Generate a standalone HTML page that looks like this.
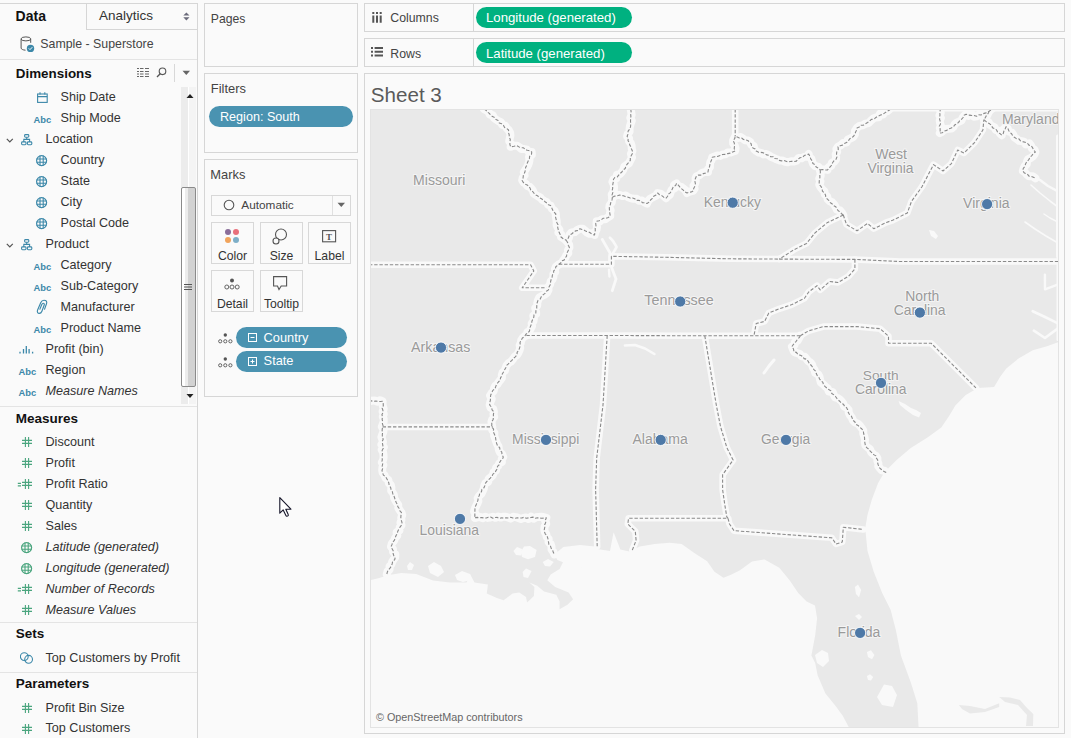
<!DOCTYPE html>
<html><head><meta charset="utf-8"><style>
html,body{margin:0;padding:0;width:1071px;height:738px;overflow:hidden;background:#fafafa;font-family:'Liberation Sans', sans-serif;}
</style></head><body>
<div style="position:absolute;left:0;top:3px;width:197px;height:1px;background:#d6d6d6"></div><div style="position:absolute;left:197px;top:3px;width:1px;height:735px;background:#d6d6d6"></div><div style="position:absolute;left:86px;top:3px;width:111px;height:27px;border-left:1px solid #d6d6d6;border-bottom:1px solid #d6d6d6;box-sizing:border-box"></div><div style="position:absolute;left:15.6px;top:9.45px;font:normal bold 14px/1 'Liberation Sans', sans-serif;color:#111;white-space:nowrap;">Data</div><div style="position:absolute;left:99px;top:9.47px;font:normal normal 13.5px/1 'Liberation Sans', sans-serif;color:#333;white-space:nowrap;">Analytics</div><svg style="position:absolute;left:183px;top:12px" width="7" height="9" viewBox="0 0 7 9"><path d="M0.3 3.6L3.4 0.4L6.5 3.6ZM0.3 5.2L3.4 8.4L6.5 5.2Z" fill="#6b6b7b"/></svg><svg style="position:absolute;left:20px;top:36px" width="16" height="17" viewBox="0 0 16 17"><ellipse cx="5.9" cy="2.9" rx="4.8" ry="2" fill="none" stroke="#555" stroke-width="1"/><path d="M1.1 2.9V12C1.1 13.2 3 14 5.5 14.2M10.7 2.9V6.8" fill="none" stroke="#555" stroke-width="1"/><circle cx="10.5" cy="12.4" r="3.7" fill="#3c88a9"/><path d="M8.8 12.4L10 13.6L12.3 11.2" fill="none" stroke="#fff" stroke-width="1"/></svg><div style="position:absolute;left:40.3px;top:37.55px;font:normal normal 12.35px/1 'Liberation Sans', sans-serif;color:#444;white-space:nowrap;">Sample - Superstore</div><div style="position:absolute;left:0;top:59px;width:197px;height:1px;background:#e4e4e4"></div><div style="position:absolute;left:15.8px;top:66.96px;font:normal bold 13.4px/1 'Liberation Sans', sans-serif;color:#111;white-space:nowrap;">Dimensions</div><svg style="position:absolute;left:136px;top:67px" width="14" height="11" viewBox="0 0 14 11"><path d="M1 1.5H3M4 1.5H7.5M9 1.5H13M1 4.5H3M4 4.5H7.5M9 4.5H13M1 7H3M4 7H7.5M9 7H13M1 9.5H3M4 9.5H7.5M9 9.5H13" stroke="#666" stroke-width="1"/></svg><svg style="position:absolute;left:156px;top:67px" width="11" height="11" viewBox="0 0 11 11"><circle cx="6.5" cy="4.3" r="3.3" fill="none" stroke="#555" stroke-width="1.1"/><path d="M4.2 6.7L1 10" stroke="#555" stroke-width="1.3"/></svg><div style="position:absolute;left:174px;top:64px;width:1px;height:18px;background:#d8d8d8"></div><svg style="position:absolute;left:182px;top:70px" width="9" height="6" viewBox="0 0 9 6"><path d="M0.5 0.8H8L4.3 5Z" fill="#666"/></svg><div style="position:absolute;left:181px;top:87px;width:7px;height:317px;background:#ececec"></div><div style="position:absolute;left:188px;top:87px;width:1px;height:317px;background:#fff"></div><div style="position:absolute;left:189px;top:87px;width:7px;height:317px;background:#f4f4f4"></div><svg style="position:absolute;left:185.5px;top:93px" width="8" height="6" viewBox="0 0 8 6"><path d="M0.5 5H7.5L4 1Z" fill="#222"/></svg><svg style="position:absolute;left:185.5px;top:393px" width="8" height="6" viewBox="0 0 8 6"><path d="M0.5 1H7.5L4 5Z" fill="#222"/></svg><div style="position:absolute;left:181px;top:187px;width:15px;height:200px;box-sizing:border-box;border:1px solid #8a8a8a;border-radius:2px;background:linear-gradient(90deg,#fff 0,#fff 24%,#ececec 24%,#ececec 46%,#d2d2d2 46%)"></div><svg style="position:absolute;left:184px;top:283px" width="8" height="8" viewBox="0 0 8 8"><path d="M0 1.5H8M0 4H8M0 6.5H8" stroke="#555" stroke-width="1"/></svg><div style="position:absolute;left:0;top:406px;width:197px;height:1px;background:#e4e4e4"></div><svg style="position:absolute;left:37px;top:92px" width="11" height="11" viewBox="0 0 11 11"><rect x="0.6" y="2" width="9.6" height="8.4" fill="none" stroke="#3c88a9" stroke-width="1.1"/><path d="M0.6 4.6H10.2M3 0.3V2.6M7.8 0.3V2.6" stroke="#3c88a9" stroke-width="1.1"/></svg><div style="position:absolute;left:60.5px;top:91.03px;font:normal normal 12.6px/1 'Liberation Sans', sans-serif;color:#333;white-space:nowrap;">Ship Date</div><div style="position:absolute;left:33.6px;top:114.7px;font:bold 9.4px/1 'Liberation Sans', sans-serif;color:#3c88a9;letter-spacing:-0.1px">Abc</div><div style="position:absolute;left:60.5px;top:112.03px;font:normal normal 12.6px/1 'Liberation Sans', sans-serif;color:#333;white-space:nowrap;">Ship Mode</div><svg style="position:absolute;left:21px;top:134px" width="12" height="12" viewBox="0 0 12 12"><rect x="3.6" y="0.6" width="4.2" height="2.6" rx="0.9" fill="none" stroke="#3c88a9" stroke-width="1.1"/><rect x="0.6" y="7.9" width="4.4" height="2.8" rx="0.9" fill="none" stroke="#3c88a9" stroke-width="1.1"/><rect x="6.4" y="7.9" width="4.4" height="2.8" rx="0.9" fill="none" stroke="#3c88a9" stroke-width="1.1"/><path d="M5.7 3.2V5.4H2.8V7.9M5.7 5.4H8.6V7.9" fill="none" stroke="#3c88a9" stroke-width="1.1"/></svg><svg style="position:absolute;left:5.5px;top:137.5px" width="9" height="6" viewBox="0 0 9 6"><path d="M0.8 0.8L3.8 3.9L6.8 0.8" fill="none" stroke="#555" stroke-width="1.2"/></svg><div style="position:absolute;left:45.5px;top:133.03px;font:normal normal 12.6px/1 'Liberation Sans', sans-serif;color:#333;white-space:nowrap;">Location</div><svg style="position:absolute;left:36px;top:155px" width="12" height="12" viewBox="0 0 12 12"><circle cx="5.6" cy="5.6" r="5" fill="none" stroke="#3c88a9" stroke-width="1.2"/><path d="M0.6 4H10.6M0.6 7.2H10.6M4 0.6V10.6M7.2 0.6V10.6" stroke="#3c88a9" stroke-width="1.1" fill="none"/></svg><div style="position:absolute;left:60.5px;top:154.03px;font:normal normal 12.6px/1 'Liberation Sans', sans-serif;color:#333;white-space:nowrap;">Country</div><svg style="position:absolute;left:36px;top:176px" width="12" height="12" viewBox="0 0 12 12"><circle cx="5.6" cy="5.6" r="5" fill="none" stroke="#3c88a9" stroke-width="1.2"/><path d="M0.6 4H10.6M0.6 7.2H10.6M4 0.6V10.6M7.2 0.6V10.6" stroke="#3c88a9" stroke-width="1.1" fill="none"/></svg><div style="position:absolute;left:60.5px;top:175.03px;font:normal normal 12.6px/1 'Liberation Sans', sans-serif;color:#333;white-space:nowrap;">State</div><svg style="position:absolute;left:36px;top:197px" width="12" height="12" viewBox="0 0 12 12"><circle cx="5.6" cy="5.6" r="5" fill="none" stroke="#3c88a9" stroke-width="1.2"/><path d="M0.6 4H10.6M0.6 7.2H10.6M4 0.6V10.6M7.2 0.6V10.6" stroke="#3c88a9" stroke-width="1.1" fill="none"/></svg><div style="position:absolute;left:60.5px;top:196.03px;font:normal normal 12.6px/1 'Liberation Sans', sans-serif;color:#333;white-space:nowrap;">City</div><svg style="position:absolute;left:36px;top:218px" width="12" height="12" viewBox="0 0 12 12"><circle cx="5.6" cy="5.6" r="5" fill="none" stroke="#3c88a9" stroke-width="1.2"/><path d="M0.6 4H10.6M0.6 7.2H10.6M4 0.6V10.6M7.2 0.6V10.6" stroke="#3c88a9" stroke-width="1.1" fill="none"/></svg><div style="position:absolute;left:60.5px;top:217.03px;font:normal normal 12.6px/1 'Liberation Sans', sans-serif;color:#333;white-space:nowrap;">Postal Code</div><svg style="position:absolute;left:21px;top:239px" width="12" height="12" viewBox="0 0 12 12"><rect x="3.6" y="0.6" width="4.2" height="2.6" rx="0.9" fill="none" stroke="#3c88a9" stroke-width="1.1"/><rect x="0.6" y="7.9" width="4.4" height="2.8" rx="0.9" fill="none" stroke="#3c88a9" stroke-width="1.1"/><rect x="6.4" y="7.9" width="4.4" height="2.8" rx="0.9" fill="none" stroke="#3c88a9" stroke-width="1.1"/><path d="M5.7 3.2V5.4H2.8V7.9M5.7 5.4H8.6V7.9" fill="none" stroke="#3c88a9" stroke-width="1.1"/></svg><svg style="position:absolute;left:5.5px;top:242.5px" width="9" height="6" viewBox="0 0 9 6"><path d="M0.8 0.8L3.8 3.9L6.8 0.8" fill="none" stroke="#555" stroke-width="1.2"/></svg><div style="position:absolute;left:45.5px;top:238.03px;font:normal normal 12.6px/1 'Liberation Sans', sans-serif;color:#333;white-space:nowrap;">Product</div><div style="position:absolute;left:33.6px;top:261.7px;font:bold 9.4px/1 'Liberation Sans', sans-serif;color:#3c88a9;letter-spacing:-0.1px">Abc</div><div style="position:absolute;left:60.5px;top:259.03px;font:normal normal 12.6px/1 'Liberation Sans', sans-serif;color:#333;white-space:nowrap;">Category</div><div style="position:absolute;left:33.6px;top:282.7px;font:bold 9.4px/1 'Liberation Sans', sans-serif;color:#3c88a9;letter-spacing:-0.1px">Abc</div><div style="position:absolute;left:60.5px;top:280.03px;font:normal normal 12.6px/1 'Liberation Sans', sans-serif;color:#333;white-space:nowrap;">Sub-Category</div><svg style="position:absolute;left:32px;top:297.3px" width="20" height="19" viewBox="0 0 20 19"><path d="M12.4 12.6L14.5 6.8C15.3 4.6 14.2 3.2 12 3.2C10.5 3.2 9.4 4.2 8.7 5.8L5.6 13C4.8 15 5.8 16.4 7.3 16.4C8.6 16.4 9.4 15.5 9.9 14.2L12.2 8C12.6 6.9 12.1 6.2 11.2 6.2C10.5 6.2 10.1 6.8 9.8 7.5L7.7 12.6" fill="none" stroke="#3c88a9" stroke-width="1.15"/></svg><div style="position:absolute;left:60.5px;top:301.03px;font:normal normal 12.6px/1 'Liberation Sans', sans-serif;color:#333;white-space:nowrap;">Manufacturer</div><div style="position:absolute;left:33.6px;top:324.7px;font:bold 9.4px/1 'Liberation Sans', sans-serif;color:#3c88a9;letter-spacing:-0.1px">Abc</div><div style="position:absolute;left:60.5px;top:322.03px;font:normal normal 12.6px/1 'Liberation Sans', sans-serif;color:#333;white-space:nowrap;">Product Name</div><svg style="position:absolute;left:19px;top:345px" width="15" height="9" viewBox="0 0 15 9"><path d="M1 6.8V8.4M4.5 4V8.4M7.3 1V8.4M10.1 4V8.4M13.6 6.8V8.4" stroke="#3c88a9" stroke-width="1.3"/></svg><div style="position:absolute;left:45.5px;top:343.03px;font:normal normal 12.6px/1 'Liberation Sans', sans-serif;color:#333;white-space:nowrap;">Profit (bin)</div><div style="position:absolute;left:18.6px;top:366.7px;font:bold 9.4px/1 'Liberation Sans', sans-serif;color:#3c88a9;letter-spacing:-0.1px">Abc</div><div style="position:absolute;left:45.5px;top:364.03px;font:normal normal 12.6px/1 'Liberation Sans', sans-serif;color:#333;white-space:nowrap;">Region</div><div style="position:absolute;left:18.6px;top:387.7px;font:bold 9.4px/1 'Liberation Sans', sans-serif;color:#3c88a9;letter-spacing:-0.1px">Abc</div><div style="position:absolute;left:45.5px;top:385.03px;font:italic normal 12.6px/1 'Liberation Sans', sans-serif;color:#333;white-space:nowrap;">Measure Names</div><div style="position:absolute;left:15.8px;top:411.67px;font:normal bold 13.5px/1 'Liberation Sans', sans-serif;color:#111;white-space:nowrap;">Measures</div><svg style="position:absolute;left:17px;top:437px" width="16" height="10" viewBox="0 0 16 10"><path d="M8.4 0V10M11.6 0V10M5 3.4H15M5 6.4H15" stroke="#4aa57e" stroke-width="1.1" fill="none"/></svg><div style="position:absolute;left:45.5px;top:436.03px;font:normal normal 12.6px/1 'Liberation Sans', sans-serif;color:#333;white-space:nowrap;">Discount</div><svg style="position:absolute;left:17px;top:458px" width="16" height="10" viewBox="0 0 16 10"><path d="M8.4 0V10M11.6 0V10M5 3.4H15M5 6.4H15" stroke="#4aa57e" stroke-width="1.1" fill="none"/></svg><div style="position:absolute;left:45.5px;top:457.03px;font:normal normal 12.6px/1 'Liberation Sans', sans-serif;color:#333;white-space:nowrap;">Profit</div><svg style="position:absolute;left:17px;top:479px" width="16" height="10" viewBox="0 0 16 10"><path d="M8.4 0V10M11.6 0V10M5 3.4H15M5 6.4H15" stroke="#4aa57e" stroke-width="1.1" fill="none"/><path d="M0.8 4.4H4M0.8 6.9H4" stroke="#4aa57e" stroke-width="1.3" fill="none"/></svg><div style="position:absolute;left:45.5px;top:478.03px;font:normal normal 12.6px/1 'Liberation Sans', sans-serif;color:#333;white-space:nowrap;">Profit Ratio</div><svg style="position:absolute;left:17px;top:500px" width="16" height="10" viewBox="0 0 16 10"><path d="M8.4 0V10M11.6 0V10M5 3.4H15M5 6.4H15" stroke="#4aa57e" stroke-width="1.1" fill="none"/></svg><div style="position:absolute;left:45.5px;top:499.03px;font:normal normal 12.6px/1 'Liberation Sans', sans-serif;color:#333;white-space:nowrap;">Quantity</div><svg style="position:absolute;left:17px;top:521px" width="16" height="10" viewBox="0 0 16 10"><path d="M8.4 0V10M11.6 0V10M5 3.4H15M5 6.4H15" stroke="#4aa57e" stroke-width="1.1" fill="none"/></svg><div style="position:absolute;left:45.5px;top:520.03px;font:normal normal 12.6px/1 'Liberation Sans', sans-serif;color:#333;white-space:nowrap;">Sales</div><svg style="position:absolute;left:21px;top:542px" width="12" height="12" viewBox="0 0 12 12"><circle cx="5.6" cy="5.6" r="5" fill="none" stroke="#4aa57e" stroke-width="1.2"/><path d="M0.6 4H10.6M0.6 7.2H10.6M4 0.6V10.6M7.2 0.6V10.6" stroke="#4aa57e" stroke-width="1.1" fill="none"/></svg><div style="position:absolute;left:45.5px;top:541.03px;font:italic normal 12.6px/1 'Liberation Sans', sans-serif;color:#333;white-space:nowrap;">Latitude (generated)</div><svg style="position:absolute;left:21px;top:563px" width="12" height="12" viewBox="0 0 12 12"><circle cx="5.6" cy="5.6" r="5" fill="none" stroke="#4aa57e" stroke-width="1.2"/><path d="M0.6 4H10.6M0.6 7.2H10.6M4 0.6V10.6M7.2 0.6V10.6" stroke="#4aa57e" stroke-width="1.1" fill="none"/></svg><div style="position:absolute;left:45.5px;top:562.03px;font:italic normal 12.6px/1 'Liberation Sans', sans-serif;color:#333;white-space:nowrap;">Longitude (generated)</div><svg style="position:absolute;left:17px;top:584px" width="16" height="10" viewBox="0 0 16 10"><path d="M8.4 0V10M11.6 0V10M5 3.4H15M5 6.4H15" stroke="#4aa57e" stroke-width="1.1" fill="none"/><path d="M0.8 4.4H4M0.8 6.9H4" stroke="#4aa57e" stroke-width="1.3" fill="none"/></svg><div style="position:absolute;left:45.5px;top:583.03px;font:italic normal 12.6px/1 'Liberation Sans', sans-serif;color:#333;white-space:nowrap;">Number of Records</div><svg style="position:absolute;left:17px;top:605px" width="16" height="10" viewBox="0 0 16 10"><path d="M8.4 0V10M11.6 0V10M5 3.4H15M5 6.4H15" stroke="#4aa57e" stroke-width="1.1" fill="none"/></svg><div style="position:absolute;left:45.5px;top:604.03px;font:italic normal 12.6px/1 'Liberation Sans', sans-serif;color:#333;white-space:nowrap;">Measure Values</div><div style="position:absolute;left:0;top:622px;width:197px;height:1px;background:#e4e4e4"></div><div style="position:absolute;left:15.8px;top:626.87px;font:normal bold 13.5px/1 'Liberation Sans', sans-serif;color:#111;white-space:nowrap;">Sets</div><svg style="position:absolute;left:20px;top:652px" width="14" height="13" viewBox="0 0 14 13"><circle cx="4.3" cy="4.6" r="3.9" fill="none" stroke="#3c88a9" stroke-width="1.1"/><circle cx="8.6" cy="7.3" r="3.9" fill="none" stroke="#3c88a9" stroke-width="1.1"/></svg><div style="position:absolute;left:45.5px;top:652.13px;font:normal normal 12.6px/1 'Liberation Sans', sans-serif;color:#333;white-space:nowrap;">Top Customers by Profit</div><div style="position:absolute;left:0;top:672px;width:197px;height:1px;background:#e4e4e4"></div><div style="position:absolute;left:15.8px;top:676.57px;font:normal bold 13.5px/1 'Liberation Sans', sans-serif;color:#111;white-space:nowrap;">Parameters</div><svg style="position:absolute;left:17px;top:703px" width="16" height="10" viewBox="0 0 16 10"><path d="M8.4 0V10M11.6 0V10M5 3.4H15M5 6.4H15" stroke="#4aa57e" stroke-width="1.1" fill="none"/></svg><div style="position:absolute;left:45.5px;top:701.73px;font:normal normal 12.6px/1 'Liberation Sans', sans-serif;color:#333;white-space:nowrap;">Profit Bin Size</div><svg style="position:absolute;left:17px;top:724px" width="16" height="10" viewBox="0 0 16 10"><path d="M8.4 0V10M11.6 0V10M5 3.4H15M5 6.4H15" stroke="#4aa57e" stroke-width="1.1" fill="none"/></svg><div style="position:absolute;left:45.5px;top:722.43px;font:normal normal 12.6px/1 'Liberation Sans', sans-serif;color:#333;white-space:nowrap;">Top Customers</div><div style="position:absolute;left:204px;top:3px;width:154px;height:64px;box-sizing:border-box;border:1px solid #d6d6d6;"></div><div style="position:absolute;left:210.8px;top:12.57px;font:normal normal 12.2px/1 'Liberation Sans', sans-serif;color:#444;white-space:nowrap;">Pages</div><div style="position:absolute;left:204px;top:73px;width:154px;height:80px;box-sizing:border-box;border:1px solid #d6d6d6;"></div><div style="position:absolute;left:210.8px;top:82.78px;font:normal normal 12.9px/1 'Liberation Sans', sans-serif;color:#444;white-space:nowrap;">Filters</div><div style="position:absolute;left:209px;top:106px;width:144px;height:21px;border-radius:10.5px;background:#4a93b1"></div><div style="position:absolute;left:220px;top:110.73px;font:normal normal 12.6px/1 'Liberation Sans', sans-serif;color:#fff;white-space:nowrap;">Region: South</div><div style="position:absolute;left:204px;top:159px;width:154px;height:238px;box-sizing:border-box;border:1px solid #d6d6d6;"></div><div style="position:absolute;left:210.3px;top:169.28px;font:normal normal 12.9px/1 'Liberation Sans', sans-serif;color:#444;white-space:nowrap;">Marks</div><div style="position:absolute;left:211px;top:195px;width:140px;height:21px;box-sizing:border-box;border:1px solid #d8d8d8;background:#fafafa"></div><div style="position:absolute;left:332px;top:196px;width:1px;height:19px;background:#e0e0e0"></div><svg style="position:absolute;left:223px;top:199px" width="12" height="12" viewBox="0 0 12 12"><circle cx="6" cy="6" r="4.8" fill="none" stroke="#555" stroke-width="1.1"/></svg><div style="position:absolute;left:241.3px;top:200.41px;font:normal normal 11.8px/1 'Liberation Sans', sans-serif;color:#444;white-space:nowrap;">Automatic</div><svg style="position:absolute;left:337px;top:202px" width="9" height="6" viewBox="0 0 9 6"><path d="M0.5 0.8H8L4.3 5Z" fill="#666"/></svg><div style="position:absolute;left:211px;top:222px;width:43px;height:42px;box-sizing:border-box;border:1px solid #d8d8d8"></div><div style="position:absolute;left:211px;top:249.67px;width:43px;text-align:center;font:12.2px/1 'Liberation Sans', sans-serif;color:#333">Color</div><div style="position:absolute;left:260px;top:222px;width:43px;height:42px;box-sizing:border-box;border:1px solid #d8d8d8"></div><div style="position:absolute;left:260px;top:249.67px;width:43px;text-align:center;font:12.2px/1 'Liberation Sans', sans-serif;color:#333">Size</div><div style="position:absolute;left:308px;top:222px;width:43px;height:42px;box-sizing:border-box;border:1px solid #d8d8d8"></div><div style="position:absolute;left:308px;top:249.67px;width:43px;text-align:center;font:12.2px/1 'Liberation Sans', sans-serif;color:#333">Label</div><div style="position:absolute;left:211px;top:270px;width:43px;height:42px;box-sizing:border-box;border:1px solid #d8d8d8"></div><div style="position:absolute;left:211px;top:297.67px;width:43px;text-align:center;font:12.2px/1 'Liberation Sans', sans-serif;color:#333">Detail</div><div style="position:absolute;left:260px;top:270px;width:43px;height:42px;box-sizing:border-box;border:1px solid #d8d8d8"></div><div style="position:absolute;left:260px;top:297.67px;width:43px;text-align:center;font:12.2px/1 'Liberation Sans', sans-serif;color:#333">Tooltip</div><svg style="position:absolute;left:224px;top:228px" width="17" height="17" viewBox="0 0 17 17"><circle cx="4" cy="4" r="3" fill="#8a6d99"/><circle cx="12" cy="4" r="3" fill="#e8707b"/><circle cx="4" cy="12" r="3" fill="#f1a45c"/><circle cx="12" cy="12" r="3" fill="#7eafc8"/></svg><svg style="position:absolute;left:272px;top:228px" width="16" height="18" viewBox="0 0 16 18"><circle cx="9" cy="6.5" r="5.5" fill="none" stroke="#555" stroke-width="1.1"/><circle cx="4" cy="13" r="3" fill="#fafafa" stroke="#555" stroke-width="1.1"/></svg><svg style="position:absolute;left:321.5px;top:229.5px" width="15" height="13" viewBox="0 0 15 13"><rect x="0.6" y="0.6" width="13" height="11.2" fill="none" stroke="#555" stroke-width="1.1"/><text x="7.1" y="9.6" font-family="Liberation Serif" font-weight="bold" font-size="9" text-anchor="middle" fill="#555">T</text></svg><svg style="position:absolute;left:224px;top:278px" width="16" height="12" viewBox="0 0 16 12"><circle cx="8" cy="2.5" r="2" fill="#555"/><circle cx="2.8" cy="9" r="2" fill="none" stroke="#555" stroke-width="0.9"/><circle cx="8" cy="9" r="2" fill="none" stroke="#555" stroke-width="0.9"/><circle cx="13.2" cy="9" r="2" fill="none" stroke="#555" stroke-width="0.9"/></svg><svg style="position:absolute;left:273px;top:276px" width="16" height="16" viewBox="0 0 16 16"><path d="M0.6 0.6H13.6V10H8.2L6 13.5L4.5 10H0.6Z" fill="none" stroke="#555" stroke-width="1.1"/></svg><svg style="position:absolute;left:218px;top:333px" width="15" height="11" viewBox="0 0 15 11"><circle cx="7.3" cy="2" r="1.7" fill="#555"/><circle cx="2.2" cy="8.3" r="1.6" fill="none" stroke="#555" stroke-width="0.9"/><circle cx="7.3" cy="8.3" r="1.6" fill="none" stroke="#555" stroke-width="0.9"/><circle cx="12.4" cy="8.3" r="1.6" fill="none" stroke="#555" stroke-width="0.9"/></svg><div style="position:absolute;left:236px;top:327px;width:111px;height:21px;border-radius:10.5px;background:#4a93b1"></div><svg style="position:absolute;left:248px;top:333px" width="9" height="9" viewBox="0 0 9 9"><rect x="0.5" y="0.5" width="8" height="8" fill="none" stroke="#fff" stroke-width="1"/><path d="M2.5 4.5H6.5" stroke="#fff" stroke-width="1"/></svg><div style="position:absolute;left:263.6px;top:331.66px;font:normal normal 12.8px/1 'Liberation Sans', sans-serif;color:#fff;white-space:nowrap;">Country</div><svg style="position:absolute;left:218px;top:357px" width="15" height="11" viewBox="0 0 15 11"><circle cx="7.3" cy="2" r="1.7" fill="#555"/><circle cx="2.2" cy="8.3" r="1.6" fill="none" stroke="#555" stroke-width="0.9"/><circle cx="7.3" cy="8.3" r="1.6" fill="none" stroke="#555" stroke-width="0.9"/><circle cx="12.4" cy="8.3" r="1.6" fill="none" stroke="#555" stroke-width="0.9"/></svg><div style="position:absolute;left:236px;top:351px;width:111px;height:21px;border-radius:10.5px;background:#4a93b1"></div><svg style="position:absolute;left:248px;top:357px" width="9" height="9" viewBox="0 0 9 9"><rect x="0.5" y="0.5" width="8" height="8" fill="none" stroke="#fff" stroke-width="1"/><path d="M2.5 4.5H6.5M4.5 2.5V6.5" stroke="#fff" stroke-width="1"/></svg><div style="position:absolute;left:263.6px;top:355.46px;font:normal normal 12.8px/1 'Liberation Sans', sans-serif;color:#fff;white-space:nowrap;">State</div><svg style="position:absolute;left:279px;top:497px" width="14" height="21" viewBox="0 0 14 21"><path d="M0.8 0.6V16.2L4.2 12.9L6.9 18.5C7.3 19.3 8.3 19.4 8.9 18.9C9.4 18.5 9.4 17.8 9.1 17.2L6.8 12.2H11.9Z" fill="#fff" stroke="#141428" stroke-width="1.1" stroke-linejoin="round"/></svg><div style="position:absolute;left:364px;top:3px;width:701px;height:29px;box-sizing:border-box;border:1px solid #d6d6d6;"></div><div style="position:absolute;left:473px;top:3px;width:1px;height:29px;background:#d6d6d6"></div><div style="position:absolute;left:390.3px;top:11.79px;font:normal normal 12.3px/1 'Liberation Sans', sans-serif;color:#444;white-space:nowrap;">Columns</div><div style="position:absolute;left:476px;top:7px;width:156px;height:21px;border-radius:10.5px;background:#00b180"></div><div style="position:absolute;left:486px;top:11.03px;font:normal normal 13.2px/1 'Liberation Sans', sans-serif;color:#fff;white-space:nowrap;">Longitude (generated)</div><svg style="position:absolute;left:372px;top:12px" width="11" height="11" viewBox="0 0 11 11"><path d="M1.3 0V2M5 0V2M8.7 0V2M1.3 3.6V10.8M5 3.6V10.8M8.7 3.6V10.8" stroke="#555" stroke-width="2"/></svg><div style="position:absolute;left:364px;top:38px;width:701px;height:29px;box-sizing:border-box;border:1px solid #d6d6d6;"></div><div style="position:absolute;left:473px;top:38px;width:1px;height:29px;background:#d6d6d6"></div><div style="position:absolute;left:390.3px;top:47.59px;font:normal normal 12.3px/1 'Liberation Sans', sans-serif;color:#444;white-space:nowrap;">Rows</div><div style="position:absolute;left:476px;top:42px;width:156px;height:21px;border-radius:10.5px;background:#00b180"></div><div style="position:absolute;left:486px;top:46.83px;font:normal normal 13.2px/1 'Liberation Sans', sans-serif;color:#fff;white-space:nowrap;">Latitude (generated)</div><svg style="position:absolute;left:371px;top:47px" width="13" height="10" viewBox="0 0 13 10"><path d="M0 1.1H2M3.6 1.1H12M0 4.8H2M3.6 4.8H12M0 8.5H2M3.6 8.5H12" stroke="#555" stroke-width="2"/></svg><div style="position:absolute;left:364px;top:73px;width:701px;height:661px;box-sizing:border-box;border:1px solid #d6d6d6;"></div><div style="position:absolute;left:370.8px;top:84.66px;font:normal normal 20.6px/1 'Liberation Sans', sans-serif;color:#5a5a5a;white-space:nowrap;letter-spacing:0px">Sheet 3</div><svg style="position:absolute;left:0;top:0" width="1071" height="738" viewBox="0 0 1071 738"><defs><clipPath id="mc"><rect x="371" y="110" width="687" height="617"/></clipPath></defs><g clip-path="url(#mc)"><rect x="370" y="109" width="689" height="619" fill="#e9e9e9"/><polygon points="369.0,580.4 378.4,578.3 388.9,575.1 401.5,573.0 416.2,574.1 433.0,580.4 449.8,582.5 466.6,582.5 470.0,574.0 474.5,582.4 487.9,584.6 486.8,593.6 496.9,598.1 503.6,600.3 512.6,593.6 519.3,592.5 526.0,597.0 527.1,602.6 533.9,595.9 534.4,586.9 529.4,582.4 537.2,585.8 544.0,591.4 556.3,594.7 559.6,601.5 559.6,609.3 567.5,604.8 573.1,599.2 568.6,592.5 555.2,586.9 547.3,580.2 550.7,574.6 559.6,569.0 563.0,562.2 557.4,560.0 554.3,554.4 563.4,547.1 580.0,544.9 595.0,546.4 597.2,549.0 610.0,550.9 613.6,532.2 620.4,549.4 629.3,551.6 630.8,550.9 639.8,546.4 654.7,544.1 669.7,542.7 681.6,544.1 693.6,552.4 707.1,561.3 714.5,571.8 723.5,577.8 731.0,574.8 740.0,570.3 752.0,561.5 764.6,559.4 779.3,567.8 789.8,580.4 798.2,593.0 806.6,601.4 815.0,605.6 817.1,618.2 815.2,635.2 811.4,655.4 815.2,662.9 817.7,675.5 825.3,693.2 835.4,705.8 842.9,715.9 849.2,728.0 369.0,728.0" fill="#f9f9f9"/><polygon points="918.6,728.0 917.3,703.3 911.0,683.1 900.9,655.4 895.9,630.2 890.6,609.8 882.2,593.0 873.8,572.0 867.5,551.0 865.4,530.0 865.4,527.3 867.5,514.7 871.7,500.0 878.0,483.2 884.4,472.3 896.6,460.1 910.8,447.9 927.1,437.7 941.3,427.6 949.4,415.4 955.5,405.2 965.7,395.0 977.9,387.9 994.1,386.9 1000.2,376.7 1006.3,368.6 1018.5,358.5 1032.8,350.3 1047.0,346.3 1059.0,342.0 1059.0,728.0" fill="#f9f9f9"/><path d="M893.0,108.2 L1058.0,108.2" fill="none" stroke="#f9f9f9" stroke-width="6.5" stroke-linecap="round" stroke-linejoin="round"/><path d="M602.3,239.5 L606.0,246.0 L609.9,252.8 L611.5,262.0 L611.8,268.0 L616.0,279.0 L612.3,290.7" fill="none" stroke="#f9f9f9" stroke-width="2.8" stroke-linecap="round" stroke-linejoin="round"/><path d="M609.9,237.6 L613.0,241.0 L616.6,247.0 L612.8,253.7" fill="none" stroke="#f9f9f9" stroke-width="2.6" stroke-linecap="round" stroke-linejoin="round"/><path d="M609.0,269.8 L609.4,276.5" fill="none" stroke="#f9f9f9" stroke-width="2.4" stroke-linecap="round" stroke-linejoin="round"/><path d="M625.0,345.5 L635.0,345.0 L645.0,348.5 L654.4,354.0" fill="none" stroke="#f9f9f9" stroke-width="2.6" stroke-linecap="round" stroke-linejoin="round"/><path d="M1032.0,176.0 L1040.0,180.0 L1048.0,186.0 L1058.0,191.4" fill="none" stroke="#f9f9f9" stroke-width="2.4" stroke-linecap="round" stroke-linejoin="round"/><path d="M1031.0,185.0 L1040.0,193.0 L1050.0,201.0 L1058.0,207.0" fill="none" stroke="#f9f9f9" stroke-width="1.6" stroke-linecap="round" stroke-linejoin="round"/><path d="M1044.0,214.0 L1050.0,218.0 L1058.0,222.0" fill="none" stroke="#f9f9f9" stroke-width="1.5" stroke-linecap="round" stroke-linejoin="round"/><path d="M1025.0,222.0 L1035.0,229.0 L1046.0,236.0 L1058.0,243.0" fill="none" stroke="#f9f9f9" stroke-width="1.6" stroke-linecap="round" stroke-linejoin="round"/><path d="M1057.5,136.0 L1057.5,256.0" fill="none" stroke="#f9f9f9" stroke-width="3" stroke-linecap="round" stroke-linejoin="round"/><path d="M1057.5,256.0 L1057.5,340.0" fill="none" stroke="#f9f9f9" stroke-width="2" stroke-linecap="round" stroke-linejoin="round"/><path d="M1044.9,274.6 L1045.0,289.3 L1058.3,284.4" fill="none" stroke="#f9f9f9" stroke-width="2.4" stroke-linecap="round" stroke-linejoin="round"/><path d="M1032.7,311.2 L1045.0,317.0 L1058.0,323.4" fill="none" stroke="#f9f9f9" stroke-width="2.6" stroke-linecap="round" stroke-linejoin="round"/><path d="M1033.9,330.7 L1044.9,338.0 L1058.0,328.3" fill="none" stroke="#f9f9f9" stroke-width="2.6" stroke-linecap="round" stroke-linejoin="round"/><path d="M579.8,560.0 L581.0,567.0 L580.5,574.6" fill="none" stroke="#f9f9f9" stroke-width="1.5" stroke-linecap="round" stroke-linejoin="round"/><path d="M764.0,373.0 L769.0,366.0 L774.0,360.0" fill="none" stroke="#f9f9f9" stroke-width="3" stroke-linecap="round" stroke-linejoin="round"/><polygon points="815.0,655.0 822.0,650.0 828.0,653.0 829.0,661.0 823.0,667.0 817.0,663.0" fill="#f9f9f9"/><polygon points="407.0,566.0 410.0,562.0 414.0,565.0 412.0,570.0 408.0,570.0" fill="#f9f9f9"/><polygon points="428.0,566.0 434.0,562.0 441.0,566.0 444.0,572.0 438.0,577.0 430.0,573.0" fill="#f9f9f9"/><polygon points="455.0,575.0 462.0,571.0 470.0,574.0 471.0,580.0 463.0,582.0 457.0,580.0" fill="#f9f9f9"/><polygon points="929.0,230.0 934.0,231.0 938.0,236.0 936.0,239.0 931.0,236.0" fill="#f9f9f9"/><polygon points="898.6,401.1 905.0,404.0 911.0,408.0 916.0,410.0 921.0,413.0 919.0,417.4 913.0,415.0 906.0,410.0 900.0,405.0" fill="#f9f9f9"/><polygon points="520.7,552.0 524.0,546.5 530.0,545.9 536.6,550.0 535.0,557.0 528.0,559.3 522.0,557.0" fill="#f9f9f9"/><polygon points="513.4,551.0 517.0,547.0 522.0,549.0 521.0,555.6 516.0,555.0" fill="#f9f9f9"/><polygon points="522.7,572.0 526.0,568.4 531.6,571.0 528.0,577.9 523.5,577.0" fill="#f9f9f9"/><polygon points="542.7,562.0 548.0,559.0 553.7,562.0 550.0,566.6 545.0,566.0" fill="#f9f9f9"/><polygon points="854.9,587.0 858.0,584.6 861.2,590.0 859.0,597.2 856.0,594.0" fill="#f9f9f9"/><polygon points="877.0,697.0 884.0,684.4 892.0,686.0 897.0,695.0 893.0,707.0 882.0,705.0" fill="#f9f9f9"/><polygon points="866.9,652.0 871.0,650.3 874.4,655.0 872.0,659.2 868.0,657.0" fill="#f9f9f9"/><polygon points="866.9,676.0 870.0,674.3 873.2,677.0 871.0,680.6 868.0,680.0" fill="#f9f9f9"/><polygon points="855.0,616.0 859.0,614.0 862.0,617.0 859.0,620.0" fill="#f9f9f9"/><polygon points="958.9,705.0 970.0,706.0 985.0,709.0 999.2,703.3 999.2,707.0 985.0,712.0 970.0,713.4 962.0,709.0" fill="#e9e9e9"/><polygon points="999.2,697.0 1010.0,697.5 1020.0,700.0 1027.0,708.0 1033.3,714.0 1033.0,726.0 1026.0,726.0 1027.0,715.0 1018.0,705.0 1005.0,702.0" fill="#e9e9e9"/><g fill="none" stroke-linejoin="round" stroke-linecap="round"><path d="M484.0,109.0 L486.3,110.4 L488.6,111.8 L489.7,114.5 L492.7,115.2 L493.9,117.8 L496.0,119.5 L498.3,121.0 L500.9,122.1 L502.3,124.8 L505.2,125.6 L506.6,128.1 L508.6,130.0 L510.1,132.7 L510.4,135.5 L509.8,138.4 L509.2,141.3 L511.3,143.9 L510.7,146.8 L513.7,145.5 L517.0,145.7 L519.3,147.1 L521.4,148.9 L524.3,149.0 L526.9,149.7 L528.8,152.1 L531.7,152.0 L531.9,154.9 L529.0,156.8 L529.5,159.9 L529.0,162.5 L528.1,165.1 L526.8,167.5 L525.4,169.9 L523.8,172.3 L524.6,175.4 L522.8,177.7 L522.2,180.4 L523.6,182.5 L525.9,183.8 L527.2,186.0 L529.9,186.9 L531.6,188.7 L533.0,190.8 L533.8,193.5 L535.9,195.0 L538.1,196.4 L540.4,197.6 L542.1,199.7 L544.4,201.0 L546.7,202.1 L548.1,204.7 L550.6,205.6 L551.9,208.7 L554.6,210.8 L555.8,214.0 L555.9,216.8 L556.4,219.6 L556.8,222.4 L556.6,225.1 L557.6,227.4 L559.4,229.5 L558.4,232.5 L561.3,234.3 L561.0,237.0 L563.7,238.4 L566.2,240.2" stroke="#f9f9f9" stroke-width="8"/><path d="M566.2,240.2 L567.7,242.5 L569.2,244.8 L569.4,247.6 L568.0,250.1 L568.3,253.2 L566.2,255.4 L565.2,258.0 L563.3,260.3 L561.8,263.0 L558.9,264.3 L555.8,266.8 L554.9,269.2 L555.2,272.1 L553.4,274.2 L553.4,277.0 L552.5,279.4 L550.6,281.5 L550.1,284.3 L548.4,286.9 L548.5,289.9 L547.1,292.7 L544.8,294.6 L542.0,296.0 L539.3,297.5 L538.0,300.4 L537.3,303.0 L537.2,305.7 L535.2,308.0 L535.9,310.9 L536.2,313.8 L533.3,315.6 L533.9,318.6 L533.4,321.3 L531.7,323.5 L532.0,326.2 L530.8,328.5 L529.6,330.8 L527.3,332.2 L526.9,335.1 L524.4,336.4 L522.6,338.2 L521.2,340.3 L520.8,342.8 L519.7,345.2 L520.2,348.0 L519.5,350.4 L518.4,352.8 L517.0,355.0 L514.6,356.8 L512.9,359.3 L511.0,361.6 L508.4,363.2 L506.5,365.5 L505.6,368.0 L504.9,370.6 L502.6,372.5 L501.8,375.1 L501.9,378.0 L500.2,380.2 L498.6,382.2 L497.3,384.4 L495.2,386.0 L494.1,388.3 L493.7,391.0 L491.8,392.8 L490.0,395.6 L491.7,399.1 L490.4,402.0 L489.7,405.0 L490.5,407.6 L493.3,409.1 L493.9,411.8 L493.5,414.3 L494.2,417.0 L492.2,419.3 L491.5,421.8 L491.8,424.4 L492.3,427.2 L492.3,430.2 L494.4,432.7 L494.1,435.7 L495.1,438.5 L496.0,441.2 L497.0,443.9 L498.5,446.4 L498.8,449.5 L499.8,452.2 L502.1,454.3 L503.3,457.0 L501.7,459.1 L501.9,462.1 L499.2,463.6 L498.1,465.9 L496.1,467.7 L496.0,470.6 L493.6,472.2 L492.9,475.2 L491.0,477.1 L488.7,478.7 L488.2,481.9 L485.5,483.2 L484.3,485.8 L483.8,488.6 L482.6,491.2 L481.5,493.8 L479.2,495.8 L477.7,498.1 L478.4,501.1 L477.3,503.6 L476.1,506.0 L475.0,508.4 L474.0,511.5 L476.1,514.7 L475.0,517.8" stroke="#f9f9f9" stroke-width="8"/><path d="M630.7,109.0 L631.2,111.9 L631.6,114.9 L630.3,117.8 L631.8,120.8 L630.7,123.7 L629.9,126.2 L629.6,128.8 L629.6,131.6 L627.8,133.8 L627.1,136.3 L629.1,138.3 L629.0,141.1 L630.8,143.3 L631.6,145.7 L631.7,148.5 L632.4,151.0 L630.9,153.9 L632.0,157.5 L630.3,160.4 L629.2,163.1 L626.7,164.8 L624.3,166.7 L623.4,169.6 L621.9,172.0 L620.0,174.0 L616.9,174.7 L616.4,178.4 L613.5,179.3 L612.4,181.8 L613.7,184.4 L614.0,187.0 L613.9,189.6 L613.2,192.1 L611.7,194.6 L612.4,197.2" stroke="#f9f9f9" stroke-width="8"/><path d="M612.4,197.2 L612.1,200.0 L611.7,202.7 L609.7,205.0 L609.3,207.7 L610.7,210.3 L609.9,213.2 L610.3,216.0 L607.7,217.4 L605.3,219.2 L602.1,219.2 L599.9,221.4 L596.7,221.3 L596.5,224.1 L597.0,226.9 L596.5,229.7 L595.2,232.3 L594.6,235.0 L592.5,233.2 L589.3,233.8 L587.0,232.5 L584.9,230.5 L582.8,228.7 L579.9,228.7 L577.2,230.1 L574.8,232.1 L571.4,232.4 L569.4,235.0 L568.8,238.2 L566.2,240.2" stroke="#f9f9f9" stroke-width="8"/><path d="M612.4,197.2 L614.7,196.0 L617.1,194.9 L619.8,195.0 L622.5,196.1 L625.7,195.4 L628.2,197.2 L630.9,198.2 L633.7,198.7 L636.6,198.8 L638.9,200.8 L642.0,200.6 L644.4,202.4 L647.0,203.5 L648.3,200.6 L650.5,198.5 L653.2,197.1 L656.1,195.7 L657.6,193.0 L660.9,193.9 L663.6,195.9 L666.0,198.2 L667.8,196.3 L669.9,194.7 L670.7,192.0 L671.8,189.6 L674.5,188.4 L674.0,184.9 L676.5,183.5 L678.0,186.1 L681.1,186.9 L683.4,188.5 L685.6,190.4 L687.0,193.0 L690.0,191.5 L693.3,190.9 L694.6,188.6 L693.5,185.8 L695.1,183.6 L695.7,181.2 L695.6,178.6 L696.4,176.2 L699.3,175.3 L701.8,173.0 L704.7,172.0 L708.0,172.0 L708.0,169.3 L709.9,167.2 L709.9,164.6 L710.3,162.1 L711.7,159.8 L712.2,157.3 L714.8,156.5 L717.3,155.4 L720.2,155.9 L722.6,154.5 L725.3,154.3 L727.5,152.5 L730.2,152.6 L732.7,151.8 L735.2,151.0 L735.6,148.2 L734.7,145.6 L733.1,143.2 L733.1,140.5 L735.2,136.3 L737.3,138.3 L740.6,137.0 L742.8,138.6 L745.1,140.3 L747.8,140.5 L750.2,142.0 L751.2,144.7 L753.8,146.1 L754.2,149.2 L756.2,151.0 L758.5,152.5 L761.2,152.9 L763.5,154.4 L766.4,153.9 L768.8,155.2 L771.2,157.0 L773.9,158.0 L776.6,159.3 L779.3,160.4 L782.2,160.5 L785.1,161.7 L788.0,162.2 L791.1,161.2 L794.0,161.5 L796.6,160.6 L798.4,158.0 L801.6,158.3 L804.0,156.9 L806.8,156.5 L808.7,154.1 L809.0,156.8 L811.3,158.6 L812.1,161.1 L812.9,163.6 L815.0,166.0 L818.6,166.9 L820.2,169.9" stroke="#f9f9f9" stroke-width="8"/><path d="M735.2,109.0 L735.2,136.3" stroke="#f9f9f9" stroke-width="6.5"/><path d="M820.2,169.9 L823.9,169.4 L827.6,169.9 L828.6,167.2 L831.3,165.9 L831.8,162.9 L834.4,161.6 L836.0,159.4 L836.1,156.8 L835.7,154.2 L837.2,151.8 L836.4,149.1 L838.0,146.8 L840.8,145.2 L843.2,143.0 L846.5,142.6 L847.8,139.7 L850.6,138.3 L853.4,136.9 L854.9,134.2 L855.0,130.7 L857.0,127.9 L859.5,125.9 L862.7,125.4 L865.4,123.7 L868.6,123.1 L870.8,120.7 L873.1,118.7 L875.9,117.4 L878.8,117.2 L879.9,113.8 L883.2,114.4 L884.8,111.9 L887.4,111.1 L891.0,108.0" stroke="#f9f9f9" stroke-width="8"/><path d="M820.2,169.9 L820.5,172.9 L820.7,175.8 L819.2,178.7 L820.5,181.7 L819.2,184.6 L820.5,187.1 L822.3,189.3 L824.4,191.4 L824.8,194.4 L827.2,196.3 L827.6,199.3 L829.7,201.1 L832.3,202.4 L834.2,204.4 L835.6,207.0 L836.8,209.7 L840.1,210.4 L841.8,212.5 L843.3,215.0" stroke="#f9f9f9" stroke-width="8"/><path d="M843.3,215.0 L846.5,224.5 L857.0,230.8 L867.5,223.4 L873.8,228.7 L886.4,222.4 L892.6,220.3 L907.3,213.0 L911.5,201.4 L922.0,186.7 L933.5,164.6 L943.0,171.0 L951.4,163.6 L957.7,150.0 L964.0,153.0 L974.5,142.6 L982.9,130.0 L983.9,119.5" stroke="#f9f9f9" stroke-width="6.5"/><path d="M939.8,108.0 L940.3,110.5 L940.7,113.0 L939.4,115.5 L940.9,118.0 L939.7,120.5 L940.1,123.1 L940.9,125.6 L939.8,128.1 L941.0,130.6 L939.8,133.1 L942.0,131.9 L943.9,130.0 L946.2,129.0 L948.9,128.7 L951.6,128.6 L953.5,126.8 L954.6,124.3 L956.6,122.7 L959.1,121.6 L961.5,120.4 L962.6,117.9 L964.1,115.8 L966.1,114.2 L968.5,115.9 L971.6,114.1 L973.8,116.7 L976.6,116.3 L978.9,114.8 L981.3,113.4 L983.8,112.3 L986.5,111.7 L989.2,111.1 L993.0,108.0" stroke="#f9f9f9" stroke-width="8"/><path d="M989.2,111.1 L987.8,114.1 L986.4,117.2 L983.9,119.5 L985.6,121.5 L988.6,122.2 L989.8,124.8 L992.1,126.2 L994.6,127.4 L995.8,130.0 L998.6,130.8 L999.9,133.3 L1001.8,135.2 L1002.2,131.9 L1003.6,129.1 L1006.0,126.8 L1007.8,128.8 L1008.7,131.5 L1011.8,132.5 L1013.3,134.8 L1014.4,137.3 L1016.7,138.8 L1018.7,140.7 L1021.5,141.1 L1024.1,141.9 L1025.8,144.4 L1029.3,143.4 L1031.2,145.7 L1031.8,148.3 L1034.5,149.6 L1035.4,152.0 L1034.4,154.5 L1032.8,156.5 L1030.7,158.0 L1028.1,159.1 L1027.0,161.5 L1026.7,164.2 L1024.7,166.2 L1023.5,168.5 L1022.8,171.0 L1025.1,172.5 L1026.9,174.6 L1029.0,176.2 L1032.6,176.2 L1035.4,178.3" stroke="#f9f9f9" stroke-width="8"/><path d="M843.3,215.0 L827.6,222.4 L815.0,232.9 L806.6,243.4 L794.0,249.7 L779.3,259.1" stroke="#f9f9f9" stroke-width="6.5"/><path d="M558.9,264.3 L611.4,264.3 L611.4,256.3 L666.0,257.3 L730.0,258.8 L779.3,259.1" stroke="#f9f9f9" stroke-width="6.5"/><path d="M779.3,259.1 L854.9,259.4 L900.0,261.5 L1058.0,261.5" stroke="#f9f9f9" stroke-width="6.5"/><path d="M854.9,259.4 L854.9,268.9 L848.6,276.2 L838.0,282.5 L829.7,281.5 L820.2,289.9 L817.0,285.7 L808.7,292.0 L804.5,298.3 L791.9,304.6 L779.3,308.8 L768.8,313.0 L764.6,321.4 L756.2,323.5 L754.1,335.0" stroke="#f9f9f9" stroke-width="6.5"/><path d="M369.0,264.7 L530.6,264.7 L533.8,271.0 L522.2,287.8 L546.4,287.8" stroke="#f9f9f9" stroke-width="6.5"/><path d="M526.4,335.5 L607.2,335.5 L704.8,335.8 L754.1,335.8 L800.3,335.7" stroke="#f9f9f9" stroke-width="6.5"/><path d="M800.3,335.7 L808.7,330.8 L823.4,326.6 L857.0,326.6 L880.0,328.7 L888.5,336.1 L888.5,343.2 L931.1,343.2 L975.9,387.9" stroke="#f9f9f9" stroke-width="6.5"/><path d="M800.3,335.7 L799.0,338.2 L797.7,340.6 L794.9,342.0 L794.5,345.1 L791.9,346.6 L792.9,349.2 L794.0,351.8 L796.7,353.0 L799.6,353.8 L801.6,356.3 L804.7,356.7 L806.6,359.2 L808.3,361.2 L810.6,362.7 L812.2,364.9 L812.9,367.6 L814.6,369.9 L815.2,372.9 L818.2,374.3 L819.5,376.8 L820.1,379.8 L820.9,382.6 L823.4,384.4 L825.4,386.6 L827.8,388.4 L828.8,391.6 L832.6,392.0 L833.9,394.9 L835.0,397.4 L837.9,398.1 L840.0,399.7 L841.8,401.5 L843.3,403.6 L844.1,406.4 L846.5,407.6 L848.5,409.7 L848.8,412.7 L850.0,415.3 L851.8,417.5 L852.8,420.2 L854.8,422.4 L857.8,423.6 L859.9,425.7 L861.7,428.1 L863.3,430.7 L863.3,433.7 L864.3,436.6 L865.0,439.5 L864.8,442.5 L865.4,445.4 L867.6,447.4 L870.0,449.2 L871.2,452.2 L873.4,454.2 L875.9,455.9 L877.4,458.2 L877.4,461.0 L878.4,463.5 L878.3,466.3 L880.1,468.5 L881.9,470.4 L884.6,470.8 L886.4,472.7" stroke="#f9f9f9" stroke-width="8"/><path d="M607.2,335.5 L603.0,405.0 L596.7,458.0 L595.6,489.5 L597.2,546.4" stroke="#f9f9f9" stroke-width="6.5"/><path d="M704.8,335.8 L716.3,405.0 L720.5,426.5 L726.8,447.5 L733.1,460.1 L722.6,474.8 L722.6,489.5 L724.7,504.2 L726.8,516.8 L728.0,518.3" stroke="#f9f9f9" stroke-width="6.5"/><path d="M632.3,550.1 L636.1,540.4 L635.3,531.4 L627.8,524.0 L628.6,518.3 L728.0,518.3 L729.5,524.0 L734.0,530.7 L831.8,537.8 L836.0,544.0 L842.3,542.0 L843.3,527.3 L863.3,529.4" stroke="#f9f9f9" stroke-width="6.5"/><path d="M369.0,401.3 L371.7,400.8 L374.4,400.4 L377.2,401.7 L379.9,400.2 L382.6,401.3 L382.5,403.9 L382.9,406.4 L383.7,408.9 L382.6,411.5 L383.8,414.1 L382.8,416.6 L383.7,419.1 L383.7,421.7 L382.8,424.2 L381.8,426.8 L383.6,429.4 L383.3,431.9 L382.3,434.4 L381.4,437.0 L382.4,439.6 L382.9,442.1 L381.4,444.6 L383.8,447.2 L381.7,449.8 L383.1,452.3 L383.5,454.9 L383.6,457.4 L383.1,459.9 L381.8,462.5 L383.4,465.1 L382.4,467.6 L382.2,470.1 L382.6,472.7 L384.5,475.2 L385.6,478.0 L388.3,480.0 L388.9,483.2 L390.9,485.2 L391.4,487.7 L391.2,490.6 L392.7,492.7 L393.9,495.0 L394.1,497.7 L395.2,500.0 L396.6,502.5 L398.2,504.8 L398.3,507.9 L399.8,510.3 L401.5,512.6 L402.2,515.1 L401.3,517.6 L401.4,520.2 L400.5,522.7 L401.5,525.2 L399.7,527.5 L399.5,530.5 L396.6,532.2 L397.3,535.7 L395.2,537.8 L394.0,540.9 L391.8,543.5 L391.0,546.8 L392.9,549.1 L393.1,552.0 L395.3,554.2 L395.2,557.3 L393.6,559.5 L392.2,561.8 L391.4,564.4 L389.5,566.5 L389.6,569.5 L387.5,571.5 L386.8,574.1" stroke="#f9f9f9" stroke-width="8"/><path d="M382.6,426.9 L492.8,426.9" stroke="#f9f9f9" stroke-width="6.5"/><path d="M475.0,517.8 L477.6,517.3 L480.1,516.9 L482.6,518.2 L485.2,516.7 L487.8,517.9 L490.3,517.5 L492.9,516.7 L495.4,517.8 L497.9,516.6 L500.5,517.6 L503.1,516.7 L505.6,516.7 L508.1,517.6 L510.7,518.6 L513.2,516.8 L515.8,517.1 L518.4,518.1 L520.9,519.0 L523.5,518.0 L526.0,517.5 L528.5,519.0 L531.1,516.6 L533.6,518.7 L536.2,517.3 L538.8,516.9 L541.3,516.8 L543.9,517.3 L546.4,517.8 L545.1,520.6 L546.2,523.7 L544.6,526.5 L544.3,529.4 L544.8,532.0 L546.3,534.3 L546.7,537.0 L548.7,539.1 L548.5,542.0 L550.7,544.0 L551.5,546.6 L551.6,549.6 L553.3,551.8 L554.3,554.4" stroke="#f9f9f9" stroke-width="8"/><path d="M484.0,109.0 L486.0,110.2 L487.4,112.0 L489.3,113.4 L490.8,115.1 L492.5,116.6 L494.7,117.5 L496.0,119.5 L498.2,120.5 L499.3,122.9 L501.6,123.7 L503.4,125.2 L504.6,127.5 L506.8,128.5 L508.6,130.0 L508.4,132.5 L509.2,134.8 L509.3,137.2 L510.3,139.5 L509.9,142.0 L509.9,144.5 L510.7,146.8 L513.9,146.3 L517.0,145.7 L519.0,146.9 L521.1,147.7 L523.5,147.8 L525.3,149.6 L527.4,150.3 L529.7,150.8 L531.7,152.0 L531.5,154.5 L529.6,156.3 L529.4,158.7 L528.3,160.8 L527.3,163.0 L526.7,165.3 L525.6,167.5 L525.4,169.9 L524.7,172.6 L523.4,175.0 L523.1,177.8 L522.2,180.4 L523.3,182.4 L524.9,184.0 L527.2,184.9 L528.7,186.5 L530.1,188.2 L530.9,190.6 L532.9,191.7 L534.2,193.5 L535.9,195.0 L537.9,196.1 L539.6,197.7 L541.5,198.8 L543.4,200.1 L545.0,201.7 L546.9,203.0 L548.4,204.7 L550.6,205.6 L551.7,207.8 L552.7,210.1 L554.1,212.2 L555.8,214.0 L555.5,216.9 L556.2,219.6 L556.8,222.4 L558.0,224.7 L557.7,227.4 L558.3,229.9 L559.1,232.3 L560.2,234.6 L561.0,237.0 L563.4,238.9 L566.2,240.2" stroke="#8a8a8a" stroke-width="1.1" stroke-dasharray="3.4 1.8" stroke-linecap="butt"/><path d="M566.2,240.2 L567.6,242.5 L568.3,245.2 L569.4,247.6 L568.7,249.7 L567.6,251.7 L566.7,253.8 L566.6,256.1 L565.2,258.0 L564.1,260.1 L561.7,260.8 L560.7,263.0 L558.9,264.3 L555.8,266.8 L555.4,269.0 L553.7,270.8 L553.6,273.1 L552.4,275.0 L552.1,277.3 L551.2,279.3 L550.6,281.5 L550.4,284.4 L549.0,287.1 L548.5,289.9 L546.4,291.3 L545.0,293.4 L543.0,294.9 L541.3,296.7 L540.2,299.1 L538.0,300.4 L537.1,303.0 L536.8,305.6 L536.7,308.3 L535.9,310.9 L535.8,313.2 L534.0,314.9 L533.8,317.2 L532.8,319.2 L531.9,321.2 L531.7,323.5 L530.7,325.9 L529.7,328.2 L529.6,330.8 L528.0,332.8 L525.9,334.3 L524.6,336.6 L522.4,338.0 L521.2,340.3 L520.0,342.6 L520.3,345.4 L519.6,347.8 L518.8,350.2 L517.1,352.4 L517.0,355.0 L515.3,356.8 L513.4,358.4 L511.9,360.4 L510.0,362.0 L508.4,363.9 L506.5,365.5 L505.8,367.7 L504.6,369.7 L503.7,371.8 L502.4,373.7 L501.8,375.9 L500.5,377.9 L500.2,380.2 L498.4,382.0 L496.8,384.0 L495.8,386.4 L495.0,388.9 L492.8,390.4 L491.8,392.8 L490.7,395.1 L490.4,397.6 L490.4,400.1 L489.8,402.5 L489.7,405.0 L491.4,407.1 L492.1,409.8 L493.9,411.8 L493.4,414.3 L493.4,416.9 L493.2,419.5 L491.7,421.8 L491.8,424.4 L491.7,427.0 L493.6,429.1 L493.2,431.7 L494.3,434.0 L495.3,436.3 L495.7,438.7 L496.0,441.2 L496.7,443.6 L497.6,445.9 L499.7,447.7 L500.0,450.3 L501.8,452.2 L502.0,454.9 L503.3,457.0 L502.5,459.1 L500.7,460.6 L499.6,462.5 L499.1,464.8 L497.5,466.4 L497.3,468.8 L496.0,470.6 L495.0,472.8 L492.9,474.1 L492.0,476.4 L490.3,478.1 L488.6,479.7 L486.9,481.3 L485.5,483.2 L484.9,485.5 L484.0,487.7 L481.9,489.3 L481.5,491.7 L479.7,493.4 L479.2,495.8 L478.0,497.7 L478.0,500.1 L477.2,502.1 L476.4,504.2 L475.5,506.2 L475.0,508.4 L474.9,510.8 L474.9,513.1 L474.8,515.4 L475.0,517.8" stroke="#8a8a8a" stroke-width="1.1" stroke-dasharray="3.4 1.8" stroke-linecap="butt"/><path d="M630.7,109.0 L631.1,111.5 L630.6,113.9 L630.9,116.3 L630.6,118.8 L630.5,121.2 L630.7,123.7 L630.6,126.4 L629.9,128.9 L628.1,131.1 L628.1,133.9 L627.1,136.3 L628.2,138.3 L628.0,140.7 L629.4,142.6 L629.7,144.9 L630.9,146.8 L631.5,149.0 L632.4,151.0 L632.4,153.5 L631.2,155.7 L630.3,157.9 L630.3,160.4 L628.9,162.3 L627.2,164.1 L625.9,166.1 L625.2,168.5 L623.0,169.9 L621.9,172.0 L620.1,173.4 L618.7,175.1 L617.3,176.9 L614.8,177.5 L613.5,179.3 L613.4,181.5 L612.9,183.8 L612.6,186.0 L612.7,188.2 L612.2,190.5 L612.8,192.7 L612.1,194.9 L612.4,197.2" stroke="#8a8a8a" stroke-width="1.1" stroke-dasharray="3.4 1.8" stroke-linecap="butt"/><path d="M612.4,197.2 L612.0,199.9 L610.8,202.4 L610.2,205.1 L609.3,207.7 L609.5,210.5 L609.8,213.3 L610.3,216.0 L608.3,217.5 L606.0,218.4 L603.3,218.2 L601.4,219.8 L599.1,220.8 L596.7,221.3 L595.7,223.5 L596.0,225.9 L595.2,228.1 L595.3,230.4 L594.8,232.7 L594.6,235.0 L592.3,234.5 L590.5,233.0 L588.5,231.8 L586.2,231.4 L584.2,230.2 L582.1,229.4 L579.9,228.7 L578.1,230.5 L575.5,230.9 L573.5,232.4 L571.6,234.0 L569.4,235.0 L568.4,237.9 L566.2,240.2" stroke="#8a8a8a" stroke-width="1.1" stroke-dasharray="3.4 1.8" stroke-linecap="butt"/><path d="M612.4,197.2 L614.8,196.1 L617.4,195.8 L619.8,195.0 L622.6,195.6 L625.4,196.6 L628.2,197.2 L630.2,198.1 L632.6,198.0 L634.7,198.7 L636.4,200.4 L638.8,200.4 L640.9,201.0 L642.6,202.8 L644.9,202.8 L647.0,203.5 L649.1,202.1 L650.5,200.0 L652.4,198.4 L653.7,196.2 L656.0,194.9 L657.6,193.0 L659.4,194.7 L661.8,195.6 L663.7,197.2 L666.0,198.2 L667.5,196.5 L668.1,194.2 L670.2,192.9 L671.4,190.9 L672.3,188.9 L673.3,186.8 L675.6,185.6 L676.5,183.5 L678.3,185.1 L679.8,186.9 L681.4,188.6 L683.3,190.1 L684.9,191.9 L687.0,193.0 L689.1,192.2 L691.3,192.0 L693.3,190.9 L693.7,188.4 L694.9,186.1 L695.4,183.7 L694.8,181.0 L695.4,178.5 L696.4,176.2 L698.6,175.0 L701.3,175.1 L703.3,173.6 L705.7,173.0 L708.0,172.0 L708.4,169.5 L709.4,167.1 L709.9,164.6 L710.6,162.1 L711.6,159.8 L712.2,157.3 L714.8,156.7 L717.5,156.4 L720.1,155.4 L722.6,154.5 L725.3,154.4 L727.8,153.6 L730.3,153.1 L732.7,151.9 L735.2,151.0 L734.2,148.5 L734.6,145.7 L734.3,143.0 L733.1,140.5 L734.7,138.7 L735.2,136.3 L737.3,137.1 L739.3,138.0 L741.6,138.0 L743.5,139.5 L745.7,139.9 L747.8,140.5 L749.4,142.1 L751.1,143.6 L751.6,146.1 L752.9,147.9 L755.2,148.9 L756.2,151.0 L758.2,152.1 L760.4,152.3 L762.7,152.6 L764.7,153.5 L766.6,154.9 L768.8,155.2 L770.7,156.7 L773.3,156.7 L775.0,158.5 L777.5,158.8 L779.3,160.4 L781.7,160.9 L784.2,160.5 L786.6,161.5 L789.0,161.8 L791.5,161.3 L794.0,161.5 L796.4,161.1 L798.1,159.1 L800.0,157.8 L802.5,157.4 L804.2,155.6 L806.4,154.8 L808.7,154.1 L809.9,156.4 L810.7,158.9 L812.3,161.0 L812.9,163.6 L815.1,164.7 L816.2,167.1 L818.5,168.1 L820.2,169.9" stroke="#8a8a8a" stroke-width="1.1" stroke-dasharray="3.4 1.8" stroke-linecap="butt"/><path d="M735.2,109.0 L735.2,136.3" stroke="#8a8a8a" stroke-width="1.1" stroke-dasharray="3.4 1.8" stroke-linecap="butt"/><path d="M820.2,169.9 L822.7,169.5 L825.1,170.0 L827.6,169.9 L828.9,168.0 L830.5,166.5 L831.9,164.8 L832.7,162.5 L834.1,160.7 L836.0,159.4 L836.9,157.0 L836.5,154.3 L836.8,151.8 L838.3,149.4 L838.0,146.8 L840.1,145.7 L842.5,145.1 L844.4,143.6 L846.5,142.6 L848.3,141.1 L849.5,138.9 L851.7,137.7 L853.6,136.2 L854.9,134.2 L855.6,132.1 L856.6,130.1 L857.0,127.9 L859.2,127.1 L860.9,125.3 L863.5,125.1 L865.4,123.7 L867.6,122.5 L869.5,120.9 L871.4,119.4 L874.1,119.1 L875.9,117.4 L878.2,116.1 L880.6,115.1 L883.1,114.1 L885.2,112.6 L887.4,111.1 L889.6,110.0 L891.0,108.0" stroke="#8a8a8a" stroke-width="1.1" stroke-dasharray="3.4 1.8" stroke-linecap="butt"/><path d="M820.2,169.9 L820.4,172.4 L819.8,174.8 L819.9,177.3 L819.4,179.7 L819.2,182.1 L819.2,184.6 L820.9,186.4 L822.2,188.5 L822.4,191.1 L824.3,192.8 L825.5,194.9 L825.8,197.5 L827.6,199.3 L829.2,200.8 L830.4,202.8 L832.3,204.0 L833.7,205.7 L835.8,206.8 L836.9,208.9 L838.2,210.7 L840.1,211.9 L841.5,213.7 L843.3,215.0" stroke="#8a8a8a" stroke-width="1.1" stroke-dasharray="3.4 1.8" stroke-linecap="butt"/><path d="M843.3,215.0 L846.5,224.5 L857.0,230.8 L867.5,223.4 L873.8,228.7 L886.4,222.4 L892.6,220.3 L907.3,213.0 L911.5,201.4 L922.0,186.7 L933.5,164.6 L943.0,171.0 L951.4,163.6 L957.7,150.0 L964.0,153.0 L974.5,142.6 L982.9,130.0 L983.9,119.5" stroke="#8a8a8a" stroke-width="1.1" stroke-dasharray="3.4 1.8" stroke-linecap="butt"/><path d="M939.8,108.0 L940.2,110.3 L939.7,112.6 L940.0,114.8 L939.7,117.1 L939.6,119.4 L940.4,121.7 L940.5,124.0 L939.3,126.3 L940.1,128.5 L940.2,130.8 L939.8,133.1 L942.4,132.7 L944.3,131.0 L946.8,130.4 L948.9,128.9 L951.3,128.0 L953.5,126.8 L954.7,124.9 L956.8,123.8 L958.6,122.4 L959.8,120.5 L961.6,119.2 L963.1,117.5 L964.1,115.3 L966.1,114.2 L968.7,115.1 L971.3,115.4 L974.0,115.5 L976.6,116.3 L978.4,114.8 L981.0,115.0 L982.9,113.7 L985.1,113.1 L987.3,112.5 L989.2,111.1 L991.3,109.8 L993.0,108.0" stroke="#8a8a8a" stroke-width="1.1" stroke-dasharray="3.4 1.8" stroke-linecap="butt"/><path d="M989.2,111.1 L988.2,113.4 L986.5,115.3 L985.4,117.5 L983.9,119.5 L985.6,121.2 L987.4,122.8 L989.7,123.8 L991.5,125.3 L992.5,127.7 L994.9,128.7 L996.7,130.2 L997.8,132.6 L1000.0,133.6 L1001.8,135.2 L1003.3,133.3 L1003.9,131.0 L1005.1,129.0 L1006.0,126.8 L1007.8,128.2 L1008.7,130.4 L1009.8,132.4 L1011.6,133.8 L1012.7,135.8 L1014.4,137.3 L1016.4,138.6 L1018.9,138.9 L1020.5,140.8 L1022.7,141.6 L1025.0,142.3 L1027.3,143.0 L1028.9,145.1 L1031.2,145.7 L1032.6,147.8 L1033.7,150.1 L1035.4,152.0 L1033.3,153.5 L1031.8,155.6 L1029.9,157.3 L1028.8,159.7 L1027.0,161.5 L1025.6,163.7 L1025.0,166.3 L1023.3,168.4 L1022.8,171.0 L1024.5,173.1 L1027.3,174.0 L1029.0,176.2 L1031.3,176.4 L1033.4,177.2 L1035.4,178.3" stroke="#8a8a8a" stroke-width="1.1" stroke-dasharray="3.4 1.8" stroke-linecap="butt"/><path d="M843.3,215.0 L827.6,222.4 L815.0,232.9 L806.6,243.4 L794.0,249.7 L779.3,259.1" stroke="#8a8a8a" stroke-width="1.1" stroke-dasharray="3.4 1.8" stroke-linecap="butt"/><path d="M558.9,264.3 L611.4,264.3 L611.4,256.3 L666.0,257.3 L730.0,258.8 L779.3,259.1" stroke="#8a8a8a" stroke-width="1.1" stroke-dasharray="3.4 1.8" stroke-linecap="butt"/><path d="M779.3,259.1 L854.9,259.4 L900.0,261.5 L1058.0,261.5" stroke="#8a8a8a" stroke-width="1.1" stroke-dasharray="3.4 1.8" stroke-linecap="butt"/><path d="M854.9,259.4 L854.9,268.9 L848.6,276.2 L838.0,282.5 L829.7,281.5 L820.2,289.9 L817.0,285.7 L808.7,292.0 L804.5,298.3 L791.9,304.6 L779.3,308.8 L768.8,313.0 L764.6,321.4 L756.2,323.5 L754.1,335.0" stroke="#8a8a8a" stroke-width="1.1" stroke-dasharray="3.4 1.8" stroke-linecap="butt"/><path d="M369.0,264.7 L530.6,264.7 L533.8,271.0 L522.2,287.8 L546.4,287.8" stroke="#8a8a8a" stroke-width="1.1" stroke-dasharray="3.4 1.8" stroke-linecap="butt"/><path d="M526.4,335.5 L607.2,335.5 L704.8,335.8 L754.1,335.8 L800.3,335.7" stroke="#8a8a8a" stroke-width="1.1" stroke-dasharray="3.4 1.8" stroke-linecap="butt"/><path d="M800.3,335.7 L808.7,330.8 L823.4,326.6 L857.0,326.6 L880.0,328.7 L888.5,336.1 L888.5,343.2 L931.1,343.2 L975.9,387.9" stroke="#8a8a8a" stroke-width="1.1" stroke-dasharray="3.4 1.8" stroke-linecap="butt"/><path d="M800.3,335.7 L799.2,337.7 L797.5,339.3 L796.2,341.3 L794.6,342.9 L793.2,344.7 L791.9,346.6 L793.5,349.0 L794.0,351.8 L796.4,352.4 L798.0,354.7 L800.5,355.2 L802.6,356.4 L804.1,358.6 L806.6,359.2 L808.2,361.3 L809.4,363.7 L811.4,365.5 L812.9,367.6 L813.9,369.6 L815.6,371.1 L816.2,373.3 L817.1,375.3 L818.7,377.0 L819.6,379.0 L820.9,380.8 L822.8,382.2 L823.4,384.4 L824.9,386.4 L826.8,388.0 L828.8,389.5 L830.9,390.9 L831.8,393.5 L833.9,394.9 L835.5,396.5 L836.8,398.3 L838.2,400.0 L840.0,401.5 L841.4,403.3 L843.5,404.3 L844.6,406.3 L846.5,407.6 L847.6,409.7 L848.1,412.1 L849.2,414.1 L851.2,415.7 L852.2,417.9 L852.8,420.2 L854.8,421.7 L855.8,424.2 L858.1,425.4 L859.7,427.3 L861.7,428.8 L863.3,430.7 L863.6,433.2 L864.2,435.6 L864.6,438.0 L864.6,440.5 L864.9,443.0 L865.4,445.4 L866.7,447.6 L868.7,449.1 L870.2,451.1 L872.0,452.8 L873.7,454.6 L875.9,455.9 L876.4,458.1 L877.7,460.0 L877.5,462.4 L878.1,464.5 L878.9,466.6 L880.1,468.5 L882.1,470.0 L884.1,471.5 L886.4,472.7" stroke="#8a8a8a" stroke-width="1.1" stroke-dasharray="3.4 1.8" stroke-linecap="butt"/><path d="M607.2,335.5 L603.0,405.0 L596.7,458.0 L595.6,489.5 L597.2,546.4" stroke="#8a8a8a" stroke-width="1.1" stroke-dasharray="3.4 1.8" stroke-linecap="butt"/><path d="M704.8,335.8 L716.3,405.0 L720.5,426.5 L726.8,447.5 L733.1,460.1 L722.6,474.8 L722.6,489.5 L724.7,504.2 L726.8,516.8 L728.0,518.3" stroke="#8a8a8a" stroke-width="1.1" stroke-dasharray="3.4 1.8" stroke-linecap="butt"/><path d="M632.3,550.1 L636.1,540.4 L635.3,531.4 L627.8,524.0 L628.6,518.3 L728.0,518.3 L729.5,524.0 L734.0,530.7 L831.8,537.8 L836.0,544.0 L842.3,542.0 L843.3,527.3 L863.3,529.4" stroke="#8a8a8a" stroke-width="1.1" stroke-dasharray="3.4 1.8" stroke-linecap="butt"/><path d="M369.0,401.3 L371.3,400.9 L373.5,401.4 L375.8,401.1 L378.1,401.4 L380.3,401.5 L382.6,401.3 L383.2,403.5 L383.3,405.8 L382.1,408.0 L382.9,410.2 L383.0,412.5 L381.9,414.7 L382.6,416.9 L382.1,419.1 L382.6,421.4 L382.4,423.6 L383.1,425.8 L382.4,428.1 L382.1,430.3 L382.6,432.5 L382.3,434.8 L382.4,437.0 L383.2,439.2 L382.2,441.5 L382.5,443.7 L382.9,445.9 L383.3,448.2 L382.1,450.4 L382.6,452.6 L382.3,454.9 L382.1,457.1 L382.3,459.3 L382.0,461.5 L382.7,463.8 L382.2,466.0 L382.7,468.2 L382.0,470.5 L382.6,472.7 L383.4,475.1 L385.6,476.6 L386.8,478.7 L388.0,480.9 L388.9,483.2 L389.1,485.5 L390.6,487.4 L391.1,489.6 L392.3,491.5 L392.8,493.7 L393.8,495.7 L394.6,497.8 L395.2,500.0 L396.1,502.2 L397.2,504.3 L397.8,506.6 L399.2,508.5 L399.9,510.8 L401.5,512.6 L401.0,515.1 L400.8,517.6 L401.3,520.2 L402.0,522.7 L401.5,525.2 L400.0,527.1 L398.8,529.1 L397.8,531.2 L397.2,533.6 L396.0,535.6 L395.2,537.8 L394.5,540.2 L392.7,542.1 L392.0,544.5 L391.0,546.8 L392.1,548.8 L393.2,550.8 L393.1,553.3 L393.7,555.5 L395.2,557.3 L394.7,559.7 L392.7,561.3 L392.2,563.7 L391.4,565.9 L390.2,567.9 L388.6,569.7 L387.4,571.8 L386.8,574.1" stroke="#8a8a8a" stroke-width="1.1" stroke-dasharray="3.4 1.8" stroke-linecap="butt"/><path d="M382.6,426.9 L492.8,426.9" stroke="#8a8a8a" stroke-width="1.1" stroke-dasharray="3.4 1.8" stroke-linecap="butt"/><path d="M475.0,517.8 L477.2,517.4 L479.5,517.9 L481.7,517.6 L483.9,517.9 L486.2,518.0 L488.4,517.2 L490.6,517.1 L492.9,518.3 L495.1,517.5 L497.3,517.4 L499.5,518.5 L501.8,517.8 L504.0,518.3 L506.2,517.8 L508.5,518.0 L510.7,517.3 L512.9,518.0 L515.2,518.3 L517.4,517.8 L519.6,518.1 L521.9,518.0 L524.1,517.2 L526.3,518.2 L528.5,517.9 L530.8,517.5 L533.0,517.1 L535.2,518.3 L537.5,517.8 L539.7,518.1 L541.9,518.3 L544.2,518.1 L546.4,517.8 L545.4,520.0 L545.7,522.5 L544.7,524.7 L544.8,527.1 L544.3,529.4 L544.4,531.7 L545.2,533.8 L546.9,535.5 L547.6,537.6 L548.2,539.8 L548.5,542.0 L548.9,544.3 L550.5,546.1 L551.2,548.3 L552.6,550.1 L553.3,552.3 L554.3,554.4" stroke="#8a8a8a" stroke-width="1.1" stroke-dasharray="3.4 1.8" stroke-linecap="butt"/></g><g font-family="Liberation Sans" fill="#9a9a9a" stroke="#f4f4f4" stroke-width="2" paint-order="stroke"><text x="413.1" y="185.0" font-size="14.05">Missouri</text><text x="703.8" y="206.8" font-size="13.9">Kentucky</text><text x="644.3" y="304.6" font-size="14.35">Tennessee</text><text x="411.1" y="351.8" font-size="14.2">Arkansas</text><text x="512.1" y="444.0" font-size="13.9">Mississippi</text><text x="632.5" y="443.9" font-size="14.0">Alabama</text><text x="761.1" y="443.9" font-size="13.8">Georgia</text><text x="419.5" y="535.2" font-size="13.9">Louisiana</text><text x="837.6" y="637.1" font-size="14.0">Florida</text><text x="963.1" y="207.7" font-size="14.0">Virginia</text><text x="1001.9" y="123.5" font-size="14.0">Maryland</text><text x="875.2" y="158.7" font-size="14.1">West</text><text x="867.4" y="172.9" font-size="13.9">Virginia</text><text x="905.3" y="300.8" font-size="13.9">North</text><text x="893.8" y="314.7" font-size="13.9">Carolina</text><text x="862.8" y="379.9" font-size="13.7">South</text><text x="854.9" y="393.7" font-size="13.86">Carolina</text></g><circle cx="441" cy="347.6" r="5.6" fill="#4e79a7" stroke="#fff" stroke-width="1" stroke-opacity="0.85"/><circle cx="460" cy="518.9" r="5.6" fill="#4e79a7" stroke="#fff" stroke-width="1" stroke-opacity="0.85"/><circle cx="546" cy="439.9" r="5.6" fill="#4e79a7" stroke="#fff" stroke-width="1" stroke-opacity="0.85"/><circle cx="660.7" cy="439.9" r="5.6" fill="#4e79a7" stroke="#fff" stroke-width="1" stroke-opacity="0.85"/><circle cx="786" cy="439.9" r="5.6" fill="#4e79a7" stroke="#fff" stroke-width="1" stroke-opacity="0.85"/><circle cx="881" cy="382.9" r="5.6" fill="#4e79a7" stroke="#fff" stroke-width="1" stroke-opacity="0.85"/><circle cx="919.9" cy="312.6" r="5.6" fill="#4e79a7" stroke="#fff" stroke-width="1" stroke-opacity="0.85"/><circle cx="987.1" cy="204.1" r="5.6" fill="#4e79a7" stroke="#fff" stroke-width="1" stroke-opacity="0.85"/><circle cx="732.7" cy="202.7" r="5.6" fill="#4e79a7" stroke="#fff" stroke-width="1" stroke-opacity="0.85"/><circle cx="680.2" cy="301.5" r="5.6" fill="#4e79a7" stroke="#fff" stroke-width="1" stroke-opacity="0.85"/><circle cx="860.1" cy="632.9" r="5.6" fill="#4e79a7" stroke="#fff" stroke-width="1" stroke-opacity="0.85"/><text x="376" y="720.6" font-family="Liberation Sans" font-size="10.8" fill="#666">© OpenStreetMap contributors</text></g><rect x="370.5" y="109.5" width="688" height="618" fill="none" stroke="#e3e3e3"/></svg>
</body></html>
